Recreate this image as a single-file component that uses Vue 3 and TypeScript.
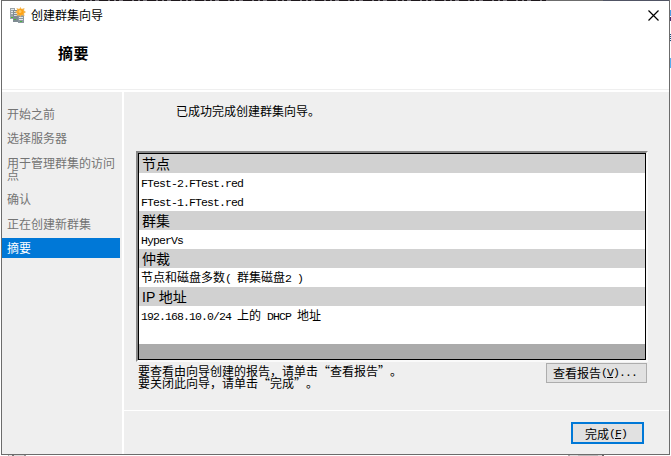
<script setup lang="ts">
import { defineComponent, h } from 'vue'

interface Row { text: string; heading?: boolean }

// Renders half-width runs in a fixed-pitch face beside full-width Chinese glyphs.
const MixedText = defineComponent({
  props: { text: { type: String, required: true } },
  setup(props) {
    return () => h('span', { class: 'mixed' }, (props.text.match(/[\x20-\x7e]+|[^\x20-\x7e]+/g) ?? []).map(part =>
      h('span', { class: /^[\x20-\x7e]/.test(part) ? 'half' : 'full' }, part)))
  },
})

const steps: string[] = ['开始之前', '选择服务器', '用于管理群集的访问点', '确认', '正在创建新群集', '摘要']
const current = 5

const rows: Row[] = [
  { text: '节点', heading: true },
  { text: 'FTest-2.FTest.red' },
  { text: 'FTest-1.FTest.red' },
  { text: '群集', heading: true },
  { text: 'HyperVs' },
  { text: '仲裁', heading: true },
  { text: '节点和磁盘多数( 群集磁盘2 )' },
  { text: 'IP 地址', heading: true },
  { text: '192.168.10.0/24 上的 DHCP 地址' },
]
</script>

<template>
  <div class="screen">
    <section class="window">
      <header>
        <div class="titlebar">
          <svg class="app-icon" width="17" height="17" viewBox="0 0 17 17">
            <path d="M0 1h5v11H0z" fill="#9aa3a8" /><path d="M1 2h3v1H1zM1 4h3v1H1zM1 6h3v1H1z" fill="#e3e8ea" /><path d="M1 10h2v1H1z" fill="#45b63c" />
            <path d="M3 3h5v12H3z" fill="#7f8b92" /><path d="M4 4h3v1H4zM4 6h3v1H4zM4 8h3v1H4z" fill="#dce2e5" /><path d="M4 12h2v1H4z" fill="#45b63c" />
            <path d="M8 5h6v11H8z" fill="#8c989f" /><path d="M9 10h4v1H9zM9 12h4v1H9z" fill="#e3e8ea" /><path d="M10 14h2v1h-2z" fill="#45b63c" />
            <path d="M10.500 0 11.700 2 14.500 1 14 3.500 16 5 14 6.500 14.500 9 11.700 8.200 10.500 10 9.200 8.200 6.500 9 7.200 6.500 5 5 7.200 3.500 6.500 1 9.200 2z" fill="#f3b44e" />
            <circle cx="10.500" cy="5" r="3" fill="#ffa315" /><circle cx="10" cy="4.500" r="1.500" fill="#ffc85a" />
          </svg>
          <span class="title">创建群集向导</span>
          <svg class="close" width="11" height="11" viewBox="0 0 11 11"><path d="M.5.5l10 10M10.500.5l-10 10" fill="none" stroke="#000" stroke-width="1.200" /></svg>
        </div>
        <h1>摘要</h1>
      </header>
      <div class="body">
        <nav>
          <div v-for="(step, i) in steps" :key="step" class="step" :class="{ current: i === current }">{{ step }}</div>
        </nav>
        <main>
          <div class="content">
            <p class="message">已成功完成创建群集向导。</p>
            <div class="sunken">
              <div class="report">
                <div v-for="row in rows" :key="row.text" class="row" :class="{ heading: row.heading }">
                  <template v-if="row.heading">{{ row.text }}</template>
                  <MixedText v-else :text="row.text" />
                </div>
                <div class="filler"></div>
              </div>
            </div>
            <div class="hint">
              <div class="hint-text">
                <p>要查看由向导创建的报告，请单击“查看报告”。</p>
                <p>要关闭此向导，请单击“完成”。</p>
              </div>
              <button class="view">查看报告<span class="half">(<u>V</u>)...</span></button>
            </div>
          </div>
          <footer><button class="finish">完成<span class="half">(<u>F</u>)</span></button></footer>
        </main>
      </div>
    </section>
  </div>
</template>

<style>
body { background: #fff; overflow: hidden; }
</style>

<style scoped>
* { box-sizing: border-box; }
.screen {
  width: 671px; height: 456px; padding-left: 1px; overflow: hidden; color: #000;
  font: 12px/12px "Noto Sans CJK SC", sans-serif; text-spacing-trim: space-all;
  /* slivers of the desktop showing past the window's right and bottom edges */
  background:
    linear-gradient(#4aa0e6, #4aa0e6) 670px 10px / 1px 6px no-repeat,
    linear-gradient(#46306e, #46306e) 670px 17px / 1px 4px no-repeat,
    repeating-linear-gradient(#1f4e79 0 1px, #e8f4fc 1px 2px) 670px 34px / 1px 8px no-repeat,
    linear-gradient(#55aef0, #55aef0) 670px 58px / 1px 10px no-repeat,
    linear-gradient(90deg, #aaa 1px, #e8e8e8 1px 4px, #777 4px 6px, #ddd 6px 16px, #999 16px) 8px 455px / 18px 1px no-repeat,
    linear-gradient(90deg, #aaa 2px, #ddd 2px 10px, #bbb 10px 30px, #ddd 30px 34px, #666 34px) 568px 455px / 36px 1px no-repeat,
    #fff;
}
.window {
  width: 669px; height: 455px; display: flex; flex-direction: column;
  border: 1px solid #6c6c6c; border-top: 0; padding-top: 1px;
  background:
    linear-gradient(#6c6c6c, #6c6c6c) 0 0 / 60px 1px no-repeat,
    repeating-linear-gradient(90deg, #1d171b 0 4px, #77737a 4px 6px, #1d171b 6px 9px, #77737a 9px 13px, #1d171b 13px 22px, #77737a 22px 24px) 60px 0 / 486px 1px no-repeat,
    linear-gradient(90deg, #6c6c6c 0 55px, #505464 55px) 546px 0 / 123px 1px no-repeat,
    #fff;
}
header { height: 89px; flex: none; border-bottom: 1px solid #efefef; }
.titlebar { height: 28px; display: flex; align-items: center; padding: 0 10px 0 8px; }
.app-icon { margin-right: 4px; }
.title { flex: 1; line-height: 16px; }
h1 { margin: 15px 0 0 56px; font-size: 15px; line-height: 18px; font-weight: 700; letter-spacing: .5px; }
.body { flex: 1; min-height: 0; display: flex; gap: 2px; padding-top: 2px; }
nav { width: 120px; padding-top: 12px; background: #efefef; color: #747474; }
.step { width: 118px; padding: 4px 0 4px 5px; margin-bottom: 4.400px; }
.step.current { height: 20px; margin-top: 4px; background: #0078d7; color: #fff; }
main { flex: 1; display: flex; flex-direction: column; background: #efefef; }
.content { height: 318px; padding: 13px 21px 0 12px; }
p { margin: 0; }
.message { height: 46px; padding-left: 40px; }
.sunken { height: 211px; border: 2px solid; border-color: #878787 #fafafa #fafafa #878787; }
.report { height: 207px; display: flex; flex-direction: column; border: 1px solid #000; background: #fff; }
.row { height: 19px; flex: none; padding-left: 2px; line-height: 17px; white-space: pre; }
.row.heading { background: #d1d1d1; font: 14px/20px "Liberation Sans", "Noto Sans CJK SC", sans-serif; padding-left: 3px; }
.filler { height: 15px; margin-top: auto; background: #ababab; }
.half, :deep(.half) { font-family: "Liberation Mono", monospace; font-size: 11.500px; letter-spacing: -.9px; white-space: pre; }
.hint { display: flex; justify-content: space-between; align-items: flex-start; padding: 1px 1px 0 2px; }
.hint-text { padding-top: 2px; white-space: nowrap; }
button { display: flex; justify-content: center; align-items: center; padding: 0; color: #000; background: #e1e1e1; font: inherit; border-radius: 0; }
.view { width: 101px; height: 20px; padding-right: 3px; border: 1px solid #adadad; }
footer { flex: 1; display: flex; justify-content: flex-end; padding: 11px 25px 0 0; border-top: 1px solid #fff; }
.finish { width: 73px; height: 22px; padding: 1px 3px 0 0; border: 2px solid #0078d7; }
</style>
